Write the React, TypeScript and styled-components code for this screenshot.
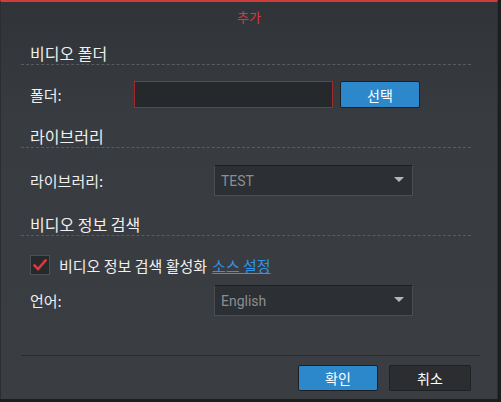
import React from "react";
import styled, { createGlobalStyle } from "styled-components";

const Global = createGlobalStyle`
  html, body { margin: 0; padding: 0; background: #1c1d1f; }
  body { font-family: "Roboto", "Noto Sans CJK KR", sans-serif; }
  * { box-sizing: border-box; }
`;

const Dialog = styled.div`
  width: 498px;
  height: 399px;
  border-top: 2px solid #d23b3c;
  border-left: 1px solid #2b2d30;
  border-right: 1px solid #2b2d30;
  background: linear-gradient(to bottom, #303337 0%, #383b3f 30%, #3a3d41 100%);
  display: flex;
  flex-direction: column;
  color: #f0f0f0;
  font-size: 14px;
`;

const Title = styled.div`
  height: 30px;
  line-height: 30px;
  text-align: center;
  color: #d8393b;
  font-size: 13px;
  font-family: "Noto Sans CJK KR", sans-serif;
`;

const Body = styled.div`
  padding: 6px 26px 0 20px;
  display: flex;
  flex-direction: column;
`;

const Heading = styled.div<{ $mt: number }>`
  margin-top: ${(p) => p.$mt}px;
  height: 27px;
  line-height: 24px;
  padding-top: 3px;
  padding-left: 9px;
  border-bottom: 1px dashed #595c60;
  font-size: 16px;
  font-family: "Noto Sans CJK KR", sans-serif;
`;

const Row = styled.div<{ $mt: number; $h: number }>`
  margin-top: ${(p) => p.$mt}px;
  height: ${(p) => p.$h}px;
  display: flex;
  align-items: center;
  padding-left: 9px;
`;

const Label = styled.div<{ $w: number }>`
  width: ${(p) => p.$w}px;
  font-family: "Noto Sans CJK KR", sans-serif;
  font-size: 15px;
`;

const TextInput = styled.div`
  width: 199px;
  height: 27px;
  background: #26292c;
  border: 1px solid #a3292b;
`;

const BlueButton = styled.button<{ $w: number }>`
  width: ${(p) => p.$w}px;
  height: 27px;
  background: #2d88cb;
  border: 1px solid #1b2025;
  border-radius: 2px;
  color: #fff;
  font-family: "Noto Sans CJK KR", sans-serif;
  font-size: 14px;
  padding: 0;
`;

const Select = styled.div`
  width: 199px;
  height: 31px;
  background: #2c2f33;
  border: 1px solid #4a4d51;
  border-top-color: #1d1f21;
  display: flex;
  align-items: center;
  justify-content: space-between;
  padding: 0 8px 0 6px;
  color: #8b8e91;
  font-family: "Roboto", sans-serif;
  font-size: 14px;
`;

const Arrow = styled.span`
  width: 0;
  height: 0;
  border-left: 5px solid transparent;
  border-right: 5px solid transparent;
  border-top: 5px solid #b4b6b8;
  margin-bottom: 2px;
`;

const CheckBox = styled.span`
  width: 20px;
  height: 20px;
  background: #26292c;
  border: 1px solid #4c4f53;
  display: inline-flex;
  align-items: center;
  justify-content: center;
  margin-right: 9px;
`;

const CheckText = styled.span`
  font-family: "Noto Sans CJK KR", sans-serif;
  font-size: 15px;
`;

const Link = styled.a`
  color: #2f95e8;
  text-decoration: underline;
  margin-left: 5px;
`;

const Footer = styled.div`
  margin-top: auto;
  margin-left: 20px;
  margin-right: 17px;
  border-top: 1px solid #2a2c2f;
  height: 44px;
  display: flex;
  justify-content: flex-end;
  align-items: flex-start;
  padding: 9px 9px 0 0;
  gap: 11px;
`;

const DarkButton = styled.button`
  width: 82px;
  height: 26px;
  background: #2b2d30;
  border: 1px solid #1f2123;
  border-radius: 2px;
  color: #fff;
  font-family: "Noto Sans CJK KR", sans-serif;
  font-size: 14px;
  padding: 0;
`;

const OkButton = styled(BlueButton)`
  height: 26px;
`;

export default function App() {
  return (
    <>
      <Global />
      <Dialog>
        <Title>추가</Title>
        <Body>
          <Heading $mt={0}>비디오 폴더</Heading>
          <Row $mt={16} $h={27}>
            <Label $w={104}>폴더:</Label>
            <TextInput />
            <BlueButton $w={80} style={{ marginLeft: 7 }}>선택</BlueButton>
          </Row>
          <Heading $mt={13}>라이브러리</Heading>
          <Row $mt={17} $h={31}>
            <Label $w={184}>라이브러리:</Label>
            <Select>
              <span>TEST</span>
              <Arrow />
            </Select>
          </Row>
          <Heading $mt={13}>비디오 정보 검색</Heading>
          <Row $mt={19} $h={20}>
            <CheckBox>
              <svg width="14" height="12" viewBox="0 0 14 12">
                <path d="M1.5 6.5 L5 10 L12.5 1.5" fill="none" stroke="#d8393b" strokeWidth="2.6" strokeLinecap="square" />
              </svg>
            </CheckBox>
            <CheckText>
              비디오 정보 검색 활성화<Link>소스 설정</Link>
            </CheckText>
          </Row>
          <Row $mt={10} $h={31}>
            <Label $w={184}>언어:</Label>
            <Select>
              <span>English</span>
              <Arrow />
            </Select>
          </Row>
        </Body>
        <Footer>
          <OkButton $w={80}>확인</OkButton>
          <DarkButton>취소</DarkButton>
        </Footer>
      </Dialog>
    </>
  );
}
